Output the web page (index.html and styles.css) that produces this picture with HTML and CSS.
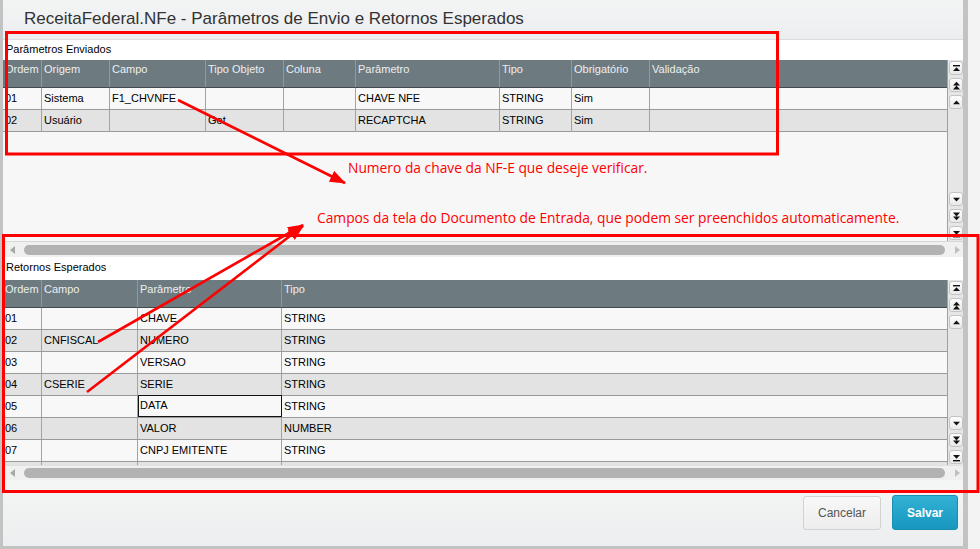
FILE: index.html
```html
<!DOCTYPE html>
<html lang="pt-BR">
<head>
  <meta charset="UTF-8">
  <title>Parâmetros de Envio e Retornos Esperados</title>
  <link rel="stylesheet" href="styles.css">
</head>
<body>
  <div class="screen">
    <div class="frame-left"></div>
    <div class="dialog">
      <div class="title-bar">ReceitaFederal.NFe - Parâmetros de Envio e Retornos Esperados</div>

      <div class="section">
        <div class="section-label">Parâmetros Enviados</div>
        <div class="grid-wrap sent">
          <div class="grid">
            <div class="row head cols-sent">
              <div class="c">Ordem</div><div class="c">Origem</div><div class="c">Campo</div>
              <div class="c">Tipo Objeto</div><div class="c">Coluna</div><div class="c">Parâmetro</div>
              <div class="c">Tipo</div><div class="c">Obrigatório</div><div class="c">Validação</div>
            </div>
            <div class="row cols-sent">
              <div class="c">01</div><div class="c">Sistema</div><div class="c">F1_CHVNFE</div>
              <div class="c"></div><div class="c"></div><div class="c">CHAVE NFE</div>
              <div class="c">STRING</div><div class="c">Sim</div><div class="c"></div>
            </div>
            <div class="row alt cols-sent">
              <div class="c">02</div><div class="c">Usuário</div><div class="c"></div>
              <div class="c">Get</div><div class="c"></div><div class="c">RECAPTCHA</div>
              <div class="c">STRING</div><div class="c">Sim</div><div class="c"></div>
            </div>
          </div>
          <div class="vscroll">
            <div class="vgroup">
              <div class="sbtn"><svg viewBox="0 0 9 9"><rect x="1" y="1" width="7" height="1.4"/><path d="M1 7h7L4.5 3.2z"/></svg></div>
              <div class="sbtn"><svg viewBox="0 0 9 9"><path d="M1 4.4h7L4.5 0.8zM1 8.4h7L4.5 4.6z"/></svg></div>
              <div class="sbtn"><svg viewBox="0 0 9 9"><path d="M1 6.2h7L4.5 2.4z"/></svg></div>
            </div>
            <div class="vgroup">
              <div class="sbtn"><svg viewBox="0 0 9 9"><path d="M1 2.8h7L4.5 6.6z"/></svg></div>
              <div class="sbtn"><svg viewBox="0 0 9 9"><path d="M1 0.6h7L4.5 4.4zM1 4.6h7L4.5 8.2z"/></svg></div>
              <div class="sbtn"><svg viewBox="0 0 9 9"><path d="M1 2h7L4.5 5.8z"/><rect x="1" y="7" width="7" height="1.4"/></svg></div>
            </div>
          </div>
        </div>
        <div class="hscroll">
          <span class="harrow left"></span>
          <span class="thumb"></span>
          <span class="harrow right"></span>
        </div>
      </div>

      <div class="section">
        <div class="section-label tall">Retornos Esperados</div>
        <div class="grid-wrap returns">
          <div class="grid">
            <div class="row head cols-ret">
              <div class="c">Ordem</div><div class="c">Campo</div><div class="c">Parâmetro</div><div class="c">Tipo</div>
            </div>
            <div class="row cols-ret"><div class="c">01</div><div class="c"></div><div class="c">CHAVE</div><div class="c">STRING</div></div>
            <div class="row alt cols-ret"><div class="c">02</div><div class="c">CNFISCAL</div><div class="c">NUMERO</div><div class="c">STRING</div></div>
            <div class="row cols-ret"><div class="c">03</div><div class="c"></div><div class="c">VERSAO</div><div class="c">STRING</div></div>
            <div class="row alt cols-ret"><div class="c">04</div><div class="c">CSERIE</div><div class="c">SERIE</div><div class="c">STRING</div></div>
            <div class="row cols-ret"><div class="c">05</div><div class="c"></div><div class="c focus">DATA</div><div class="c">STRING</div></div>
            <div class="row alt cols-ret"><div class="c">06</div><div class="c"></div><div class="c">VALOR</div><div class="c">NUMBER</div></div>
            <div class="row cols-ret"><div class="c">07</div><div class="c"></div><div class="c">CNPJ EMITENTE</div><div class="c">STRING</div></div>
            <div class="row alt cols-ret"><div class="c"></div><div class="c"></div><div class="c"></div><div class="c"></div></div>
          </div>
          <div class="vscroll">
            <div class="vgroup">
              <div class="sbtn"><svg viewBox="0 0 9 9"><rect x="1" y="1" width="7" height="1.4"/><path d="M1 7h7L4.5 3.2z"/></svg></div>
              <div class="sbtn"><svg viewBox="0 0 9 9"><path d="M1 4.4h7L4.5 0.8zM1 8.4h7L4.5 4.6z"/></svg></div>
              <div class="sbtn"><svg viewBox="0 0 9 9"><path d="M1 6.2h7L4.5 2.4z"/></svg></div>
            </div>
            <div class="vgroup">
              <div class="sbtn"><svg viewBox="0 0 9 9"><path d="M1 2.8h7L4.5 6.6z"/></svg></div>
              <div class="sbtn"><svg viewBox="0 0 9 9"><path d="M1 0.6h7L4.5 4.4zM1 4.6h7L4.5 8.2z"/></svg></div>
              <div class="sbtn"><svg viewBox="0 0 9 9"><path d="M1 2h7L4.5 5.8z"/><rect x="1" y="7" width="7" height="1.4"/></svg></div>
            </div>
          </div>
        </div>
        <div class="hscroll short">
          <span class="harrow left"></span>
          <span class="thumb"></span>
          <span class="harrow right"></span>
        </div>
        <div class="spacer"></div>
      </div>

      <div class="actions">
        <button class="btn cancel">Cancelar</button>
        <button class="btn save">Salvar</button>
      </div>
    </div>
    <div class="frame-right"></div>
    <div class="outside"></div>

    <!-- marcações em vermelho sobre o print -->
    <svg class="marks" width="980" height="549" viewBox="0 0 980 549">
      <defs>
        <marker id="head" markerUnits="userSpaceOnUse" markerWidth="16" markerHeight="12" refX="15" refY="6" orient="auto">
          <path d="M0 0L16 6L0 12z" fill="#ff0000"/>
        </marker>
      </defs>
      <rect x="6.5" y="32.5" width="771" height="121.5"/>
      <rect x="3.5" y="235.5" width="974.5" height="256"/>
      <line x1="178" y1="100" x2="345" y2="183" marker-end="url(#head)"/>
      <line x1="98" y1="342" x2="303" y2="225" marker-end="url(#head)"/>
      <line x1="87" y1="392" x2="303" y2="226" marker-end="url(#head)"/>
    </svg>
    <div class="note note-key">Numero da chave da NF-E que deseje verificar.</div>
    <div class="note note-fields">Campos da tela do Documento de Entrada, que podem ser preenchidos automaticamente.</div>
  </div>
</body>
</html>
```

FILE: styles.css
```css
* {
  box-sizing: border-box;
}
body {
  margin: 0;
  background: #f4f4f4;
  font-family: 'Liberation Sans', Arial, sans-serif;
  font-size: 11px;
  color: #000;
  overflow: hidden;
}
.screen {
  position: relative;
  display: flex;
  width: 980px;
  height: 549px;
}
.frame-left {
  width: 3px;
  height: 549px;
  background: #c3c3c3;
}
.dialog {
  width: 960px;
  height: 549px;
  display: flex;
  flex-direction: column;
  border-bottom: 3px solid #c3c3c3;
  background: #f7f7f7;
}
.frame-right {
  width: 5px;
  height: 549px;
  background: #c3c3c3;
}
.outside {
  width: 12px;
  height: 549px;
  background: #f3f3f3;
}

.title-bar {
  height: 40px;
  padding: 9px 0 0 21px;
  font-size: 17px;
  color: #333;
  background: linear-gradient(#f3f4f4, #edeef0);
  border-bottom: 1px solid #dcdcdc;
}

.section-label {
  height: 20px;
  line-height: 19px;
  padding-left: 3px;
  background: #fff;
}
.section-label.tall {
  height: 23px;
  line-height: 21px;
}

.grid-wrap {
  display: flex;
}
.grid-wrap.sent {
  height: 181px;
}
.grid-wrap.returns {
  height: 185px;
}
.grid {
  width: 946px;
  overflow: hidden;
  border-right: 1px solid #a0a0a0;
}
.row {
  display: grid;
  height: 22px;
  background: #f8f8f8;
  border-bottom: 1px solid #9a9a9a;
}
.row.alt {
  background: #e3e3e3;
}
.row.head {
  height: 28px;
  background: #6d7b80;
  color: #eeeeee;
  border-bottom: 1px solid #454b4d;
}
.cols-sent {
  grid-template-columns: 39px 68px 96px 78px 72px 144px 72px 78px 1fr;
}
.cols-ret {
  grid-template-columns: 39px 96px 144px 1fr;
}
.c {
  padding-left: 2px;
  line-height: 20px;
  white-space: nowrap;
  overflow: hidden;
  border-right: 1px solid #a3a3a3;
}
.c:last-child {
  border-right: none;
}
.head .c {
  line-height: 13px;
  padding-top: 3px;
  border-right-color: #8f9a9e;
}
.c.focus {
  border: 1px solid #111;
  margin-top: -1px;
  line-height: 19px;
  padding-left: 1px;
}

.vscroll {
  width: 15px;
  display: flex;
  flex-direction: column;
  justify-content: space-between;
  padding: 1px 0 1px 1px;
  background: #e6e6e6;
}
.vgroup {
  display: flex;
  flex-direction: column;
  gap: 3px;
}
.sbtn {
  width: 14px;
  height: 14px;
  border: 1px solid #c4c4c4;
  border-radius: 3px;
  background: linear-gradient(#fdfdfd, #e9e9e9);
  display: flex;
  align-items: center;
  justify-content: center;
}
.sbtn svg {
  width: 9px;
  height: 9px;
  fill: #111;
}

.hscroll {
  height: 16px;
  display: flex;
  align-items: center;
  border-top: 1px solid #d6d6d6;
  background: #f0f0f0;
  padding: 0 3px 0 7px;
}
.hscroll.short {
  height: 15px;
  border-top-color: #e0e0e0;
}
.harrow {
  width: 0;
  height: 0;
  border-top: 4px solid transparent;
  border-bottom: 4px solid transparent;
}
.harrow.left {
  border-right: 5px solid #a8a8a8;
  margin-right: 9px;
}
.harrow.right {
  border-left: 5px solid #c0c0c0;
  margin-left: 10px;
}
.thumb {
  flex: 1;
  height: 10px;
  border-radius: 5px;
  background: #b2b2b2;
}
.spacer {
  height: 10px;
  background: #f4f5f5;
}

.actions {
  flex: 1;
  display: flex;
  justify-content: flex-end;
  align-items: flex-start;
  gap: 11px;
  padding: 5px 5px 0 0;
  background: linear-gradient(#f3f4f4, #eceeef);
}
.btn {
  font-family: 'Liberation Sans', Arial, sans-serif;
  font-size: 12px;
  border-radius: 3px;
  cursor: pointer;
}
.btn.cancel {
  width: 78px;
  height: 34px;
  margin-top: 1px;
  color: #555;
  border: 1px solid #d2d2d2;
  background: linear-gradient(#f8f8f8, #ededed);
}
.btn.save {
  width: 66px;
  height: 35px;
  color: #fff;
  font-weight: bold;
  border: 1px solid #1a8db3;
  background: linear-gradient(#33b2d6, #1796bf);
}

.marks {
  position: absolute;
  top: 0;
  left: 0;
  pointer-events: none;
}
.marks rect,
.marks line {
  fill: none;
  stroke: #ff0000;
  stroke-width: 3;
}
.marks line {
  stroke-width: 2.6;
}
.note {
  position: absolute;
  font-family: 'Open Sans', sans-serif;
  font-size: 13.8px;
  color: #ff0000;
  white-space: nowrap;
}
.note-key {
  left: 348px;
  top: 158px;
}
.note-fields {
  left: 317px;
  top: 208px;
}
```
